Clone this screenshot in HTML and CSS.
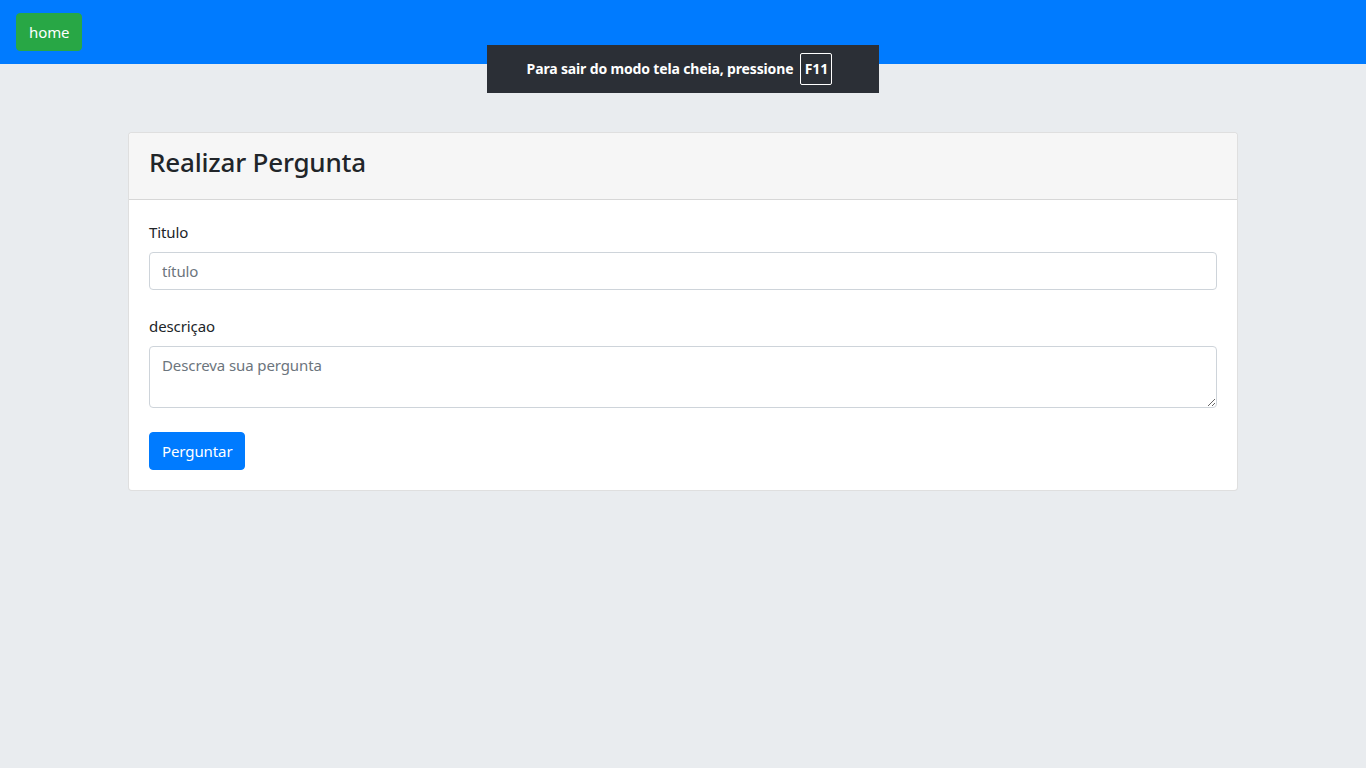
FILE: index.html
```html
<!DOCTYPE html>
<html lang="pt">
<head>
<meta charset="utf-8">
<title>Realizar Pergunta</title>
<link rel="stylesheet" href="styles.css">
</head>
<body>
<nav class="navbar">
  <a class="btn btn-success" href="#">home</a>
</nav>
<div class="fs-toast">Para sair do modo tela cheia, pressione <span class="key">F11</span></div>
<main class="container">
  <div class="card">
    <div class="card-header">
      <h3>Realizar Pergunta</h3>
    </div>
    <div class="card-body">
      <form>
        <div class="form-group">
          <label for="titulo">Titulo</label>
          <input id="titulo" class="form-control" type="text" placeholder="título">
        </div>
        <div class="form-group">
          <label for="descricao">descriçao</label>
          <textarea id="descricao" class="form-control" rows="2" placeholder="Descreva sua pergunta"></textarea>
        </div>
        <button type="button" class="btn btn-primary">Perguntar</button>
      </form>
    </div>
  </div>
</main>
</body>
</html>
```
FILE: styles.css
```css
* { box-sizing: border-box; }
html, body { margin: 0; }
body {
  background: #e9ecef;
  color: #212529;
  font-family: "Noto Sans", "Open Sans", sans-serif;
  font-size: 15px;
  letter-spacing: -0.1px;
  line-height: 24px;
}
.navbar {
  background: #007bff;
  height: 64px;
  padding: 13px 16px;
  display: flex;
  align-items: flex-start;
}
.btn {
  display: inline-block;
  font-family: inherit;
  font-size: 15px;
  letter-spacing: -0.1px;
  line-height: 24px;
  padding: 6px 12px;
  border: 1px solid transparent;
  border-radius: 4px;
  color: #fff;
  text-decoration: none;
  cursor: pointer;
}
.btn-success { background: #28a745; border-color: #28a745; }
.btn-primary { background: #007bff; border-color: #007bff; }
.fs-toast {
  position: absolute;
  top: 45px;
  left: 487px;
  width: 392px;
  height: 48px;
  padding-right: 7px;
  background: #2b2f36;
  color: #fff;
  font-weight: 700;
  font-size: 14px;
  display: flex;
  align-items: center;
  justify-content: center;
  gap: 7px;
  letter-spacing: -0.15px;
}
.fs-toast .key {
  border: 1px solid #fff;
  border-radius: 2px;
  width: 32px;
  height: 32px;
  display: inline-flex;
  align-items: center;
  justify-content: center;
}
.container {
  width: 1140px;
  margin: 68px auto 0;
  padding: 0 15px;
}
.card {
  background: #fff;
  border: 1px solid rgba(0,0,0,.125);
  border-radius: 4px;
}
.card-header {
  background: #f6f6f6;
  border-bottom: 1px solid rgba(0,0,0,.125);
  padding: 12px 20px;
  border-radius: 4px 4px 0 0;
}
.card-header h3 {
  margin: 0 0 8px;
  font-size: 26px;
  font-weight: 500;
  letter-spacing: -0.2px;
  line-height: 34px;
}
.card-body { padding: 20px; }
.form-group { margin-bottom: 24px; }
label { display: inline-block; margin-bottom: 8px; line-height: 24px; }
.form-control {
  display: block;
  width: 100%;
  font-family: inherit;
  font-size: 15px;
  letter-spacing: -0.1px;
  line-height: 24px;
  padding: 6px 12px;
  color: #495057;
  background: #fff;
  border: 1px solid #ced4da;
  border-radius: 4px;
  height: 38px;
}
textarea.form-control { height: 62px; resize: vertical; }
.form-control::placeholder { color: #6c757d; opacity: 1; }
```
